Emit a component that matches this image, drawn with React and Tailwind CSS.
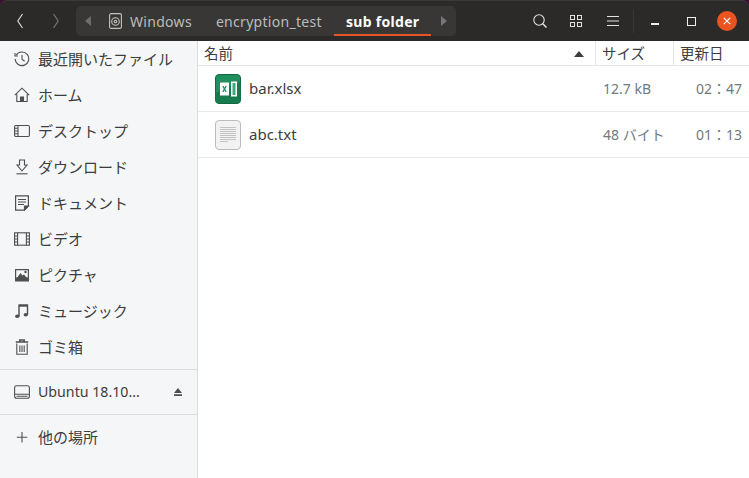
import React from 'react';

const icon = 'w-[16px] h-[16px] shrink-0';

const Clock = () => (
  <svg viewBox="0 0 16 16" className={icon} fill="none" stroke="#4f4f4f" strokeWidth="1.1">
    <path d="M2.2 4.2A6.8 6.8 0 1 1 1.2 8" />
    <path d="M1 2v3h3" />
    <path d="M8 4v4.3l2.6 2" />
  </svg>
);
const Home = () => (
  <svg viewBox="0 0 16 16" className={icon} fill="none" stroke="#4f4f4f" strokeWidth="1.1">
    <path d="M.8 8.2 8 1.2l7.2 7" />
    <path d="M2.8 7v7.5h10.4V7" />
    <path d="M6.5 14.5V10h3v4.5" fill="#4f4f4f" />
  </svg>
);
const Desktop = () => (
  <svg viewBox="0 0 16 16" className={icon} fill="none" stroke="#4f4f4f" strokeWidth="1.1">
    <rect x="0.6" y="2.5" width="14.8" height="11" rx="1.2" />
    <path d="M4 2.5v11M.6 5.2H4M.6 8H4M.6 10.8H4" />
  </svg>
);
const Download = () => (
  <svg viewBox="0 0 16 16" className={icon} fill="none" stroke="#4f4f4f" strokeWidth="1.1">
    <path d="M5.5 1h5v5H13l-5 6-5-6h2.500z" />
    <path d="M2.500 14.800h11" />
  </svg>
);
const Doc = () => (
  <svg viewBox="0 0 16 16" className={icon} fill="none" stroke="#4f4f4f" strokeWidth="1.2">
    <path d="M1.600.8h12.800v10l-4 4.400H1.600z" />
    <path d="M4 4.500h8M4 7h8M4 9.500h6" />
    <path d="M10.500 15v-4h3.900z" fill="#4f4f4f" />
  </svg>
);
const Film = () => (
  <svg viewBox="0 0 16 16" className={icon} fill="none" stroke="#4f4f4f" strokeWidth="1.1">
    <rect x="0.6" y="1.800" width="14.800" height="12.400" />
    <path d="M3.600 1.800v12.400M12.400 1.800v12.400M.6 5h3M.6 8h3M.6 11h3M12.400 5h3M12.400 8h3M12.400 11h3" />
  </svg>
);
const Picture = () => (
  <svg viewBox="0 0 16 16" className={icon}>
    <path fill="#4f4f4f" fillRule="evenodd" d="M1 2h14v12.500H1zM2.200 3.200v7.300h11.600V3.200z" />
    <path fill="#4f4f4f" d="M2.500 11.500 6.500 6l2 2.500 1.500-1 3.500 4z" />
    <circle cx="11.500" cy="5" r="1.200" fill="#4f4f4f" />
  </svg>
);
const Music = () => (
  <svg viewBox="0 0 16 16" className={icon}>
    <path fill="none" stroke="#4f4f4f" strokeWidth="1.400" d="M5 13V2.200h8.500V11.500" />
    <path fill="#4f4f4f" d="M5 1.500h9v2.200H5z" />
    <ellipse cx="3.300" cy="13.300" rx="2.200" ry="1.800" fill="#4f4f4f" />
    <ellipse cx="11.800" cy="11.800" rx="2.200" ry="1.800" fill="#4f4f4f" />
  </svg>
);
const Trash = () => (
  <svg viewBox="0 0 16 16" className={icon} fill="none" stroke="#4f4f4f" strokeWidth="1.100">
    <path d="M2.800 4.500v10.800h10.400V4.500" />
    <path d="M1.800 3h12.400M5.800 3V1h4.400v2" strokeWidth="1.500" />
    <path d="M5.800 6.500v6.500M8 6.500v6.500M10.200 6.500v6.500" />
  </svg>
);
const Drive = () => (
  <svg viewBox="0 0 16 16" className={icon} fill="none" stroke="#4f4f4f" strokeWidth="1.100">
    <rect x="0.600" y="1.800" width="14.800" height="12.400" rx="2" />
    <path d="M.6 10.200h14.800M2.500 12.300h11" />
  </svg>
);
const Plus = () => (
  <svg viewBox="0 0 16 16" className={icon} fill="none" stroke="#4f4f4f" strokeWidth="1.100">
    <path d="M8 3v10.500M2.800 8.200h10.500" />
  </svg>
);
const Eject = () => (
  <svg viewBox="0 0 10 10" className="w-[10px] h-[10px] shrink-0" fill="#4f4f4f">
    <path d="M5 1l4 5H1zM1 7.200h8V9H1z" />
  </svg>
);

const Disk = () => (
  <svg viewBox="0 0 13 16" className="w-[13px] h-[16px] shrink-0" fill="none" stroke="#c4c2bf" strokeWidth="1.100">
    <rect x="0.600" y="0.600" width="11.800" height="14.800" rx="1.500" />
    <circle cx="6.500" cy="8.500" r="3.800" />
    <circle cx="6.500" cy="8.500" r="1.300" />
  </svg>
);

const places = [
  [Clock, '最近開いたファイル'],
  [Home, 'ホーム'],
  [Desktop, 'デスクトップ'],
  [Download, 'ダウンロード'],
  [Doc, 'ドキュメント'],
  [Film, 'ビデオ'],
  [Picture, 'ピクチャ'],
  [Music, 'ミュージック'],
  [Trash, 'ゴミ箱'],
];

const SideRow = ({ Icon, children }) => (
  <div className="h-[36px] flex items-center pl-[14px] gap-[8px] text-[15px] text-[#3d3d3d]">
    <Icon />
    {children}
  </div>
);

const XlsxIcon = () => (
  <svg viewBox="0 0 26 30" className="w-[26px] h-[30px] shrink-0">
    <rect x="0.500" y="0.500" width="25" height="29" rx="3.500" fill="#1f8f5f" stroke="#14683f" />
    <path d="M0.500 19 L25.500 8 V26 a3 3 0 0 1-3 3 H4 a3 3 0 0 1-3.500-3z" fill="#177a4e" />
    <path d="M5 8.500h9v13H5z" fill="#fff" />
    <path d="M7.800 12l3.400 6M11.200 12l-3.400 6" stroke="#1f8a5b" strokeWidth="1.300" />
    <path d="M16 7.500h6v15h-6z" fill="#fff" />
    <path d="M17.500 9h3v12h-3z" fill="#3da878" />
  </svg>
);

const TxtIcon = () => (
  <svg viewBox="0 0 26 30" className="w-[26px] h-[30px] shrink-0">
    <rect x="0.500" y="0.500" width="25" height="29" rx="3.500" fill="#f2f2f2" stroke="#bdbdbd" />
    <path d="M5 7.500h16M5 9.500h16M5 11.500h16M5 13.500h16M5 15.500h16M5 17.500h16M5 19.500h16M5 21.500h8" stroke="#c2c2c2" strokeWidth="1" />
  </svg>
);

const FileRow = ({ Icon, name, size, time }) => (
  <div className="h-[46px] flex items-center border-b border-[#ebebeb] text-[15px] text-[#3d3d3d]">
    <div className="w-[398px] flex items-center gap-[8px] pl-[17px]">
      <Icon />
      <span>{name}</span>
    </div>
    <div className="w-[92px] pl-[7px] text-[14px] text-[#6f7a80]">{size}</div>
    <div className="flex-1 whitespace-nowrap text-right pr-[7px] text-[14px] text-[#6f7a80]">{time}</div>
  </div>
);

const App = () => (
  <div
    className="w-[749px] h-[478px] overflow-hidden bg-[#3b1033]"
    style={{ fontFamily: '"Noto Sans", "Noto Sans CJK JP", sans-serif' }}
  >
    <header className="h-[41px] rounded-t-[7px] bg-[#2c2a29] border-t border-[#3c3a39] flex items-center text-[#bdbbb8]">
      <div className="w-[76px] flex items-center shrink-0 pl-[17px] gap-[30px]">
        <svg viewBox="0 0 6 16" className="w-[6px] h-[16px]" fill="none" stroke="#e4e2df" strokeWidth="1.100"><path d="M5.500 1 .8 8l4.700 7" /></svg>
        <svg viewBox="0 0 6 16" className="w-[6px] h-[16px]" fill="none" stroke="#7b7977" strokeWidth="1.100"><path d="M.5 1 5.200 8 .5 15" /></svg>
      </div>
      <nav className="w-[380px] h-[30px] rounded-[5px] bg-[#393735] flex items-center shrink-0 pl-[9px] text-[14px]">
        <svg viewBox="0 0 6 10" className="w-[6px] h-[10px] shrink-0" fill="#6f6d6b"><path d="M6 0v10L0 5z" /></svg>
        <div className="ml-[18px]"><Disk /></div>
        <span className="ml-[8px] tracking-[0.3px]">Windows</span>
        <span className="ml-[24px] tracking-[0.3px]">encryption_test</span>
        <div className="relative ml-[24px] h-full flex items-center text-white font-bold text-[14px] tracking-[0.3px]">
          sub folder
          <div className="absolute -left-[12px] -right-[12px] bottom-0 h-[2px] bg-[#e95420]" />
        </div>
        <svg viewBox="0 0 6 10" className="w-[6px] h-[10px] ml-auto mr-[9px] shrink-0" fill="#77757a"><path d="M0 0v10l6-5z" /></svg>
      </nav>
      <svg viewBox="0 0 14 14" className="w-[14px] h-[14px] ml-[77px] shrink-0" fill="none" stroke="#e4e2df" strokeWidth="1.100"><circle cx="6" cy="6" r="5.200" /><path d="M9.800 9.800 13.500 13.500" strokeWidth="1.500" /></svg>
      <svg viewBox="0 0 12 12" className="w-[12px] h-[12px] ml-[23px] shrink-0" fill="none" stroke="#e4e2df" strokeWidth="1"><rect x="0.500" y="0.500" width="4" height="4" /><rect x="7.500" y="0.500" width="4" height="4" /><rect x="0.500" y="7.500" width="4" height="4" /><rect x="7.500" y="7.500" width="4" height="4" /></svg>
      <svg viewBox="0 0 12 10" className="w-[12px] h-[10px] ml-[25px] shrink-0" fill="none" stroke="#e4e2df" strokeWidth="1"><path d="M0 .5h12M0 5h12M0 9.500h12" /></svg>
      <div className="w-px h-[24px] bg-[#3a3837] ml-[14px] shrink-0" />
      <div className="w-[8px] h-[2px] bg-[#f0eeeb] mt-[6px] ml-[17px] shrink-0" />
      <div className="w-[9px] h-[9px] border border-[#f0eeeb] ml-[28px] shrink-0" />
      <div className="w-[20px] h-[20px] rounded-full bg-[#e95420] flex items-center justify-center ml-[21px] shrink-0">
        <svg viewBox="0 0 10 10" className="w-[8px] h-[8px]" fill="none" stroke="#fff" strokeWidth="1.500"><path d="M1 1l8 8M9 1l-8 8" /></svg>
      </div>
    </header>
    <div className="h-[437px] flex bg-white">
      <aside className="w-[198px] shrink-0 bg-[#f5f6f7] border-r border-[#dcdcdc] flex flex-col">
        {places.map(([Icon, label]) => (
          <SideRow key={label} Icon={Icon}>
            <span>{label}</span>
          </SideRow>
        ))}
        <div className="mt-[4px] border-t border-[#dcdcdc]" />
        <div className="h-[44px] flex items-center pl-[14px] gap-[8px] text-[14.200px] text-[#3d3d3d]">
          <Drive />
          <span>Ubuntu 18.10...</span>
          <div className="ml-[25px]"><Eject /></div>
        </div>
        <div className="border-t border-[#dcdcdc]" />
        <div className="mt-[4px]">
          <SideRow Icon={Plus}>
            <span>他の場所</span>
          </SideRow>
        </div>
      </aside>
      <main className="flex-1 min-w-0">
        <div className="h-[25px] flex items-stretch border-b border-[#e6e6e6] text-[14.500px] text-[#3d3d3d]">
          <div className="w-[398px] flex items-center justify-between pl-[6px] pr-[11px] pt-[1px] border-r border-[#e6e6e6]">
            <span>名前</span>
            <svg viewBox="0 0 10 6" className="w-[10px] h-[6px]" fill="#3d3d3d"><path d="M5 0l5 6H0z" /></svg>
          </div>
          <div className="w-[78px] flex items-center pl-[6px] pt-[1px] border-r border-[#e6e6e6]">サイズ</div>
          <div className="flex-1 flex items-center pl-[6px] pt-[1px] whitespace-nowrap">更新日</div>
        </div>
        <FileRow Icon={XlsxIcon} name="bar.xlsx" size="12.7 kB" time="02：47" />
        <FileRow Icon={TxtIcon} name="abc.txt" size="48 バイト" time="01：13" />
      </main>
    </div>
  </div>
);

export default App;
